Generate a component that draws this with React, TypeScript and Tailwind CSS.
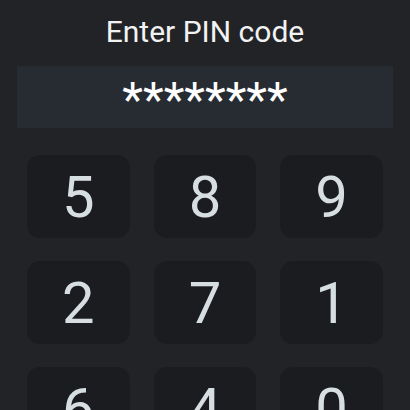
const rows = [
  ["5", "8", "9"],
  ["2", "7", "1"],
  ["6", "4", "0"],
  ["3", "", ""],
];

export default function App() {
  return (
    <div className="h-[410px] overflow-hidden bg-[#212327] font-['Roboto',sans-serif]">
      <h1 className="pt-[14px] text-center text-[30px] leading-[36px] text-[#f1f2f2]">Enter PIN code</h1>
      <div className="mx-[17px] mt-[16px] flex h-[62px] items-center justify-center bg-[#272b32] text-[48px] leading-none text-white">
        <span className="pt-[6px]">********</span>
      </div>
      <div className="mx-[27px] mt-[27px] grid grid-cols-3 gap-x-[24px] gap-y-[23px]">
        {rows.flat().map((d, i) => (
          <button
            key={i}
            className="flex h-[83px] items-center justify-center rounded-[13px] bg-[#1b1c1f] text-[58px] leading-none text-[#d6dee2]"
          >
            {d}
          </button>
        ))}
      </div>
    </div>
  );
}
